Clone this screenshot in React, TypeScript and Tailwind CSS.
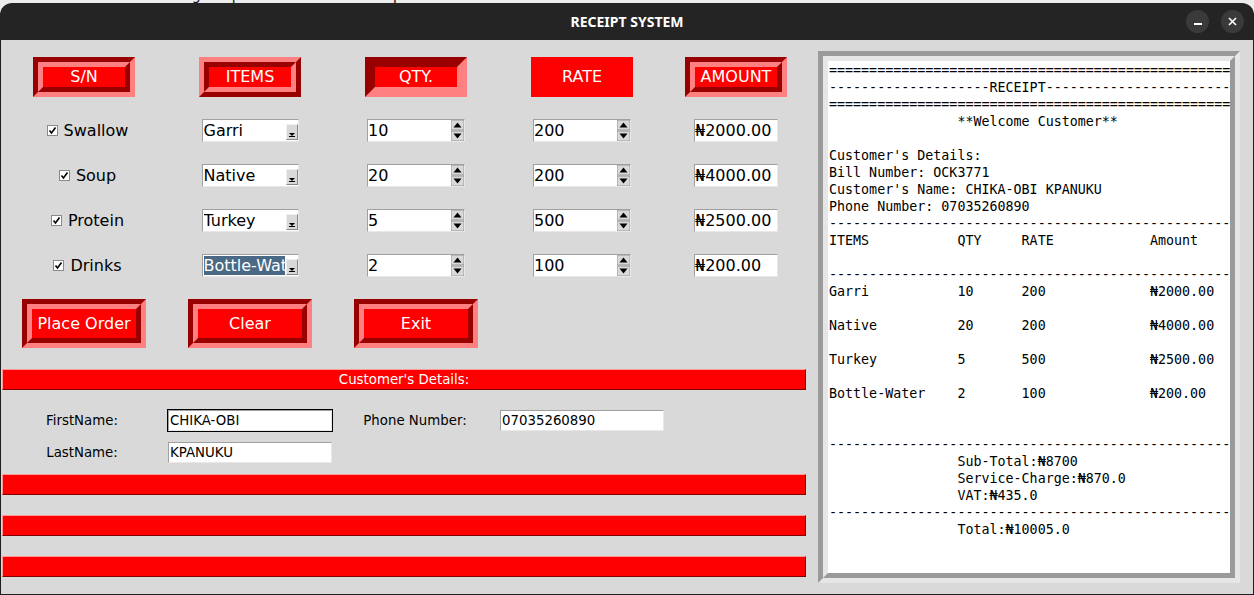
import React from 'react';

type Relief = 'groove' | 'ridge' | 'sunken' | 'flat';

const SANS = "font-['DejaVu_Sans',sans-serif]";

function Bevel({ relief, size, children }: { relief: Relief; size: string; children: React.ReactNode }) {
  const label = <span className="text-white text-[16px] leading-none whitespace-nowrap">{children}</span>;
  if (relief === 'flat') {
    return <div className={`${size} bg-[#ff0000] flex items-center justify-center`}>{label}</div>;
  }
  if (relief === 'sunken') {
    return (
      <div className={`${size} bg-[#ff0000] border-[10px] border-t-[#990000] border-l-[#990000] border-b-[#ff8080] border-r-[#ff8080] flex items-center justify-center`}>
        {label}
      </div>
    );
  }
  const outer =
    relief === 'groove'
      ? 'border-t-[#990000] border-l-[#990000] border-b-[#ff8080] border-r-[#ff8080]'
      : 'border-t-[#ff8080] border-l-[#ff8080] border-b-[#990000] border-r-[#990000]';
  const inner =
    relief === 'groove'
      ? 'border-t-[#ff8080] border-l-[#ff8080] border-b-[#990000] border-r-[#990000]'
      : 'border-t-[#990000] border-l-[#990000] border-b-[#ff8080] border-r-[#ff8080]';
  return (
    <div className={`${size} border-[5px] ${outer} flex`}>
      <div className={`flex-1 bg-[#ff0000] border-[5px] ${inner} flex items-center justify-center`}>{label}</div>
    </div>
  );
}

function Check() {
  return (
    <svg width="11" height="11" viewBox="0 0 11 11" className="shrink-0">
      <rect x="0.5" y="0.5" width="10" height="10" fill="#fff" stroke="#8a8a8a" />
      <path d="M2.5 5.5 L4.5 8 L8.5 2.5" fill="none" stroke="#000" strokeWidth="1.6" />
    </svg>
  );
}

function ItemLabel({ text }: { text: string }) {
  return (
    <div className="ml-[7px] flex items-center gap-[6px] text-[16px] text-black">
      <Check />
      <span>{text}</span>
    </div>
  );
}

function Field({ w, children, focus }: { w: string; children: React.ReactNode; focus?: boolean }) {
  return (
    <div className={`${w} h-[23px] p-px ${focus ? 'bg-black' : ''}`}>
      <div className="h-full bg-white border border-t-[#a0a0a0] border-l-[#a0a0a0] border-b-[#e8e8e8] border-r-[#e8e8e8] flex items-center overflow-hidden">
        {children}
      </div>
    </div>
  );
}

function Combo({ value, selected }: { value: string; selected?: boolean }) {
  return (
    <div className="w-[97px] h-[23px] bg-white border border-t-[#a0a0a0] border-l-[#a0a0a0] border-b-[#e8e8e8] border-r-[#e8e8e8] flex">
      <div className="flex-1 p-px overflow-hidden">
        <div className={`h-full flex items-center text-[16px] whitespace-nowrap overflow-hidden ${selected ? 'bg-[#4a6984] text-white' : 'text-black'}`}>
          {value}
        </div>
      </div>
      <div className="w-[12px] flex flex-col justify-end pb-px">
        <div className="h-[16px] bg-[#d9d9d9] border border-t-[#f0f0f0] border-l-[#f0f0f0] border-b-[#888] border-r-[#888] flex items-end justify-center pb-[2px]">
          <svg width="6" height="4" viewBox="0 0 6 4">
            <polygon points="0,0 6,0 3,3" fill="#000" />
            <rect x="0" y="3" width="6" height="1" fill="#000" />
          </svg>
        </div>
      </div>
    </div>
  );
}

function Spin({ value }: { value: string }) {
  return (
    <div className="w-[98px] h-[23px] bg-white border border-t-[#a0a0a0] border-l-[#a0a0a0] border-b-[#e8e8e8] border-r-[#e8e8e8] flex">
      <div className="flex-1 flex items-center text-[16px] text-black">{value}</div>
      <svg width="13" height="21" viewBox="0 0 13 21">
        <rect x="0" y="0" width="13" height="10" fill="#d9d9d9" stroke="#888" strokeWidth="0.8" />
        <rect x="0" y="11" width="13" height="10" fill="#d9d9d9" stroke="#888" strokeWidth="0.8" />
        <polygon points="2.5,7.5 10.5,7.5 6.5,2.5" fill="#000" />
        <polygon points="2.5,13.5 10.5,13.5 6.5,18.5" fill="#000" />
      </svg>
    </div>
  );
}

function Amount({ value }: { value: string }) {
  return (
    <div className="w-[84px] h-[23px] bg-white border border-t-[#a0a0a0] border-l-[#a0a0a0] border-b-[#e8e8e8] border-r-[#e8e8e8] flex items-center text-[16px] text-black">
      {value}
    </div>
  );
}

function Bar({ children }: { children?: React.ReactNode }) {
  return (
    <div className="ml-[1px] mr-[1px] h-[21px] bg-[#ff0000] border border-t-[#ff9999] border-l-[#ff9999] border-b-[#800000] border-r-[#800000] flex items-center justify-center text-white text-[13.33px]">
      {children}
    </div>
  );
}

const ROWS = [
  { label: 'Swallow', item: 'Garri', qty: '10', rate: '200', amount: '₦2000.00' },
  { label: 'Soup', item: 'Native', qty: '20', rate: '200', amount: '₦4000.00' },
  { label: 'Protein', item: 'Turkey', qty: '5', rate: '500', amount: '₦2500.00' },
  { label: 'Drinks', item: 'Bottle-Water', qty: '2', rate: '100', amount: '₦200.00', selected: true },
];

const pad = ' '.repeat(16);
const eq = '='.repeat(60);
const dash = '-'.repeat(60);
const row = (a: string, b: string, c: string, d: string) => a.padEnd(16) + b.padEnd(8) + c.padEnd(16) + d;

const RECEIPT = [
  eq,
  '-'.repeat(20) + 'RECEIPT' + '-'.repeat(40),
  eq,
  pad + '**Welcome Customer**',
  '',
  "Customer's Details:",
  'Bill Number: OCK3771',
  "Customer's Name: CHIKA-OBI KPANUKU",
  'Phone Number: 07035260890',
  dash,
  row('ITEMS', 'QTY', 'RATE', 'Amount'),
  '',
  dash,
  row('Garri', '10', '200', '₦2000.00'),
  '',
  row('Native', '20', '200', '₦4000.00'),
  '',
  row('Turkey', '5', '500', '₦2500.00'),
  '',
  row('Bottle-Water', '2', '100', '₦200.00'),
  '',
  '',
  dash,
  pad + 'Sub-Total:₦8700',
  pad + 'Service-Charge:₦870.0',
  pad + 'VAT:₦435.0',
  dash,
  pad + 'Total:₦10005.0',
];

export default function App() {
  return (
    <div className={`w-[1254px] h-[595px] bg-[#ececec] overflow-hidden ${SANS}`}>
      {/* editor menu peeking from behind the window */}
      <div className="h-[3px] overflow-hidden">
        <div className="-mt-[13px] pl-[10px] flex gap-[20px] text-[14px] leading-[16px] text-[#111]">
          <span>File</span>
          <span>Edit</span>
          <span>Shell</span>
          <span>Debug</span>
          <span>Options</span>
          <span>Window</span>
          <span>Help</span>
        </div>
      </div>

      <div className="h-[592px] flex flex-col rounded-t-[12px] overflow-hidden">
        {/* title bar */}
        <div className="h-[37px] bg-[#242424] flex items-center relative">
          <div className="flex-1 text-center text-white text-[14px] font-bold font-['Noto_Sans',sans-serif]">RECEIPT SYSTEM</div>
          <div className="absolute right-[10px] top-[7px] flex gap-[12px]">
            <div className="w-[23px] h-[23px] rounded-full bg-[#3a3a3a] flex items-center justify-center">
              <div className="w-[8px] h-[2px] bg-white mt-[5px]" />
            </div>
            <div className="w-[23px] h-[23px] rounded-full bg-[#3a3a3a] flex items-center justify-center">
              <svg width="9" height="9" viewBox="0 0 9 9">
                <path d="M1 1 L8 8 M8 1 L1 8" stroke="#fff" strokeWidth="1.6" />
              </svg>
            </div>
          </div>
        </div>

        {/* body */}
        <div className="flex-1 bg-[#d9d9d9] border-l border-r border-b border-[#1e1e1e] flex">
          {/* left panel */}
          <div className="w-[806px] flex flex-col">
            <div className="pt-[17px] grid grid-cols-[166px_166px_166px_166px_142px] grid-rows-[40px_23px_23px_23px_23px_49px] gap-y-[22px] justify-items-center items-center">
              <Bevel relief="groove" size="w-[102px] h-[40px]">S/N</Bevel>
              <Bevel relief="ridge" size="w-[102px] h-[40px]">ITEMS</Bevel>
              <Bevel relief="sunken" size="w-[102px] h-[40px]">QTY.</Bevel>
              <Bevel relief="flat" size="w-[102px] h-[40px]">RATE</Bevel>
              <Bevel relief="groove" size="w-[102px] h-[40px]">AMOUNT</Bevel>

              {ROWS.map((r) => (
                <React.Fragment key={r.label}>
                  <ItemLabel text={r.label} />
                  <Combo value={r.item} selected={r.selected} />
                  <Spin value={r.qty} />
                  <Spin value={r.rate} />
                  <Amount value={r.amount} />
                </React.Fragment>
              ))}

              <Bevel relief="groove" size="w-[124px] h-[49px]">Place Order</Bevel>
              <Bevel relief="groove" size="w-[124px] h-[49px]">Clear</Bevel>
              <Bevel relief="groove" size="w-[124px] h-[49px]">Exit</Bevel>
            </div>

            <div className="mt-[21px]">
              <Bar>Customer's Details:</Bar>
            </div>

            <div className="mt-[19px] grid grid-cols-[166px_166px_166px_166px] grid-rows-[23px_23px] gap-y-[9px] items-center text-[13.33px] text-black">
              <div className="justify-self-center -ml-[4px]">FirstName:</div>
              <Field w="w-[166px]" focus>
                <span className="pl-[1px]">CHIKA-OBI</span>
              </Field>
              <div className="justify-self-center -ml-[2px]">Phone Number:</div>
              <Field w="w-[166px]">
                <span className="pl-[1px]">07035260890</span>
              </Field>
              <div className="justify-self-center -ml-[4px]">LastName:</div>
              <Field w="w-[166px]">
                <span className="pl-[1px]">KPANUKU</span>
              </Field>
            </div>

            <div className="mt-[10px] flex flex-col gap-[20px]">
              <Bar />
              <Bar />
              <Bar />
            </div>
          </div>

          {/* receipt */}
          <div className="ml-[11px] mt-[11px] w-[422px] h-[532px] border-[5px] border-t-[#9a9a9a] border-l-[#9a9a9a] border-b-[#e6e6e6] border-r-[#e6e6e6] flex">
            <div className="flex-1 border-[5px] border-t-[#e6e6e6] border-l-[#e6e6e6] border-b-[#9a9a9a] border-r-[#9a9a9a] bg-white overflow-hidden pt-[1px] pl-[1px]">
              <div className="font-['DejaVu_Sans_Mono',monospace] text-[13.33px] leading-[17px] text-black whitespace-pre">
                {RECEIPT.map((l, i) => (
                  <div key={i} className="h-[17px]">{l}</div>
                ))}
              </div>
            </div>
          </div>
        </div>
      </div>
    </div>
  );
}
